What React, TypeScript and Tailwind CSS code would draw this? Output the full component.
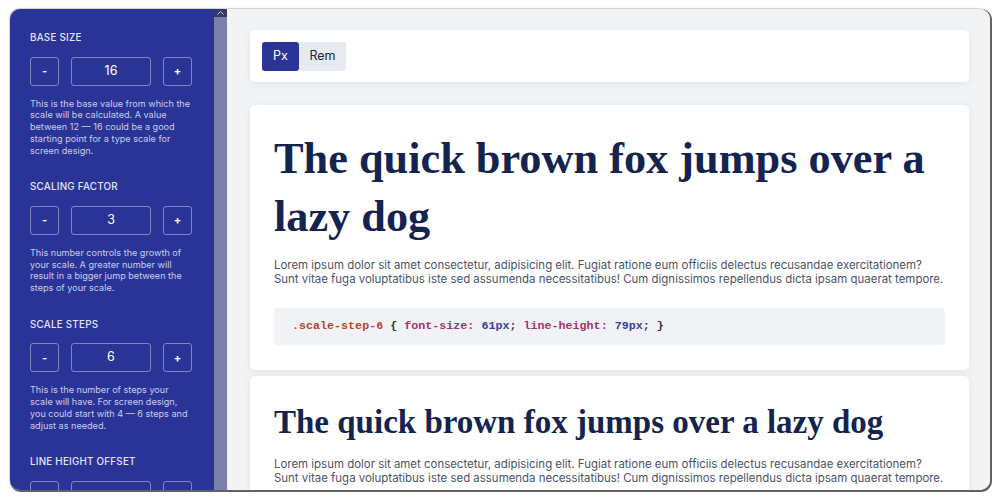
import React from "react";

const sections = [
  {
    label: "Base Size",
    value: "16",
    lines: [
      "This is the base value from which the",
      "scale will be calculated. A value",
      "between 12 — 16 could be a good",
      "starting point for a type scale for",
      "screen design.",
    ],
  },
  {
    label: "Scaling Factor",
    value: "3",
    lines: [
      "This number controls the growth of",
      "your scale. A greater number will",
      "result in a bigger jump between the",
      "steps of your scale.",
    ],
  },
  {
    label: "Scale Steps",
    value: "6",
    lines: [
      "This is the number of steps your",
      "scale will have. For screen design,",
      "you could start with 4 — 6 steps and",
      "adjust as needed.",
    ],
  },
  { label: "Line Height Offset", value: "", lines: [] as string[] },
];

const lorem = [
  "Lorem ipsum dolor sit amet consectetur, adipisicing elit. Fugiat ratione eum officiis delectus recusandae exercitationem?",
  "Sunt vitae fuga voluptatibus iste sed assumenda necessitatibus! Cum dignissimos repellendus dicta ipsam quaerat tempore.",
];

function Stepper({ value }: { value: string }) {
  return (
    <div className="mt-[12.5px] flex gap-3 h-[29px]">
      <button className="w-[29px] h-full rounded-[3px] border border-white/40 text-white text-[11px] font-bold flex items-center justify-center">
        -
      </button>
      <div className="w-[80px] h-full rounded-[3px] border border-white/40 text-white text-[12.5px] flex items-center justify-center">
        {value}
      </div>
      <button className="w-[29px] h-full rounded-[3px] border border-white/40 text-white text-[11px] font-bold flex items-center justify-center">
        +
      </button>
    </div>
  );
}

function Sample({ size, lead, twoLine }: { size: string; lead: string; twoLine?: boolean }) {
  return (
    <div className="bg-white rounded-[5px] shadow-[0_2px_8px_rgba(30,40,80,0.07)] px-6 pt-[25px] pb-[25px]">
      <h1 className={`${size} ${lead} font-bold text-[#14234f] font-['Liberation_Serif',serif]`}>
        The quick brown fox jumps over a lazy dog
      </h1>
      <p className="mt-[14px] text-[11.45px] leading-[13.5px] text-[#4b5268] font-['Inter',sans-serif]">
        {lorem.map((l) => (
          <span key={l} className="block whitespace-nowrap">
            {l}
          </span>
        ))}
      </p>
      {twoLine && (
        <div className="mt-[22px] h-[37px] rounded-[4px] bg-[#f1f2f5] pl-[18px] flex items-center font-['Liberation_Mono',monospace] text-[11.7px] font-bold whitespace-pre">
          <span className="text-[#b4472a]">.scale-step-6</span>
          <span className="text-[#333]"> {"{"} </span>
          <span className="text-[#a3326b]">font-size:</span>
          <span className="text-[#36419a]"> 61px</span>
          <span className="text-[#333]">; </span>
          <span className="text-[#a3326b]">line-height:</span>
          <span className="text-[#36419a]"> 79px</span>
          <span className="text-[#333]">; {"}"}</span>
        </div>
      )}
    </div>
  );
}

export default function App() {
  return (
    <div className="w-[1000px] h-[500px] bg-white pt-[9px] pb-[10px] px-[10px]">
      <div className="h-full flex rounded-[10px] overflow-hidden shadow-[1px_1px_0_1px_rgba(70,70,70,0.85),-1px_-1px_1px_0_rgba(180,180,180,0.6)]">
        {/* Sidebar */}
        <aside className="w-[204px] flex-none bg-[#2a3496] pl-5 pr-3 pt-[23px] font-['Inter',sans-serif] overflow-hidden">
          {sections.map((s) => (
            <div key={s.label} className="mb-[25px]">
              <div className="text-[9.8px] leading-[12px] font-medium uppercase tracking-[0.025em] text-[#e4e6fb]">
                {s.label}
              </div>
              <Stepper value={s.value} />
              {s.lines.length > 0 && (
                <p className="mt-3 text-[9.1px] leading-[11.75px] text-[#c8ccef]">
                  {s.lines.map((l) => (
                    <span key={l} className="block whitespace-nowrap">
                      {l}
                    </span>
                  ))}
                </p>
              )}
            </div>
          ))}
        </aside>

        {/* Scrollbar */}
        <div className="w-[13px] flex-none bg-[#7b80aa] flex flex-col">
          <div className="h-[8px] bg-[#343a6c] flex items-center justify-center">
            <svg width="7" height="4" viewBox="0 0 7 4">
              <path d="M0.5 3.5 L3.5 0.5 L6.5 3.5" stroke="#c9cbe0" strokeWidth="1" fill="none" />
            </svg>
          </div>
        </div>

        {/* Main */}
        <main className="flex-1 bg-[#f2f3f5] pl-[23px] pr-[21px] pt-[21px] overflow-hidden">
          <div className="bg-white rounded-[5px] shadow-[0_2px_8px_rgba(30,40,80,0.07)] h-[52px] px-3 flex items-center font-['Inter',sans-serif] text-[12.5px]">
            <button className="h-[29px] w-[37px] rounded-[3px] bg-[#2a3496] text-white">Px</button>
            <button className="h-[29px] w-[47px] rounded-[3px] bg-[#e8eaf2] text-[#1f2233]">Rem</button>
          </div>
          <div className="mt-[23px] flex flex-col gap-[6px]">
            <Sample size="text-[44.3px]" lead="leading-[57.5px]" twoLine />
            <Sample size="text-[33px]" lead="leading-[43px]" />
          </div>
        </main>
      </div>
    </div>
  );
}
